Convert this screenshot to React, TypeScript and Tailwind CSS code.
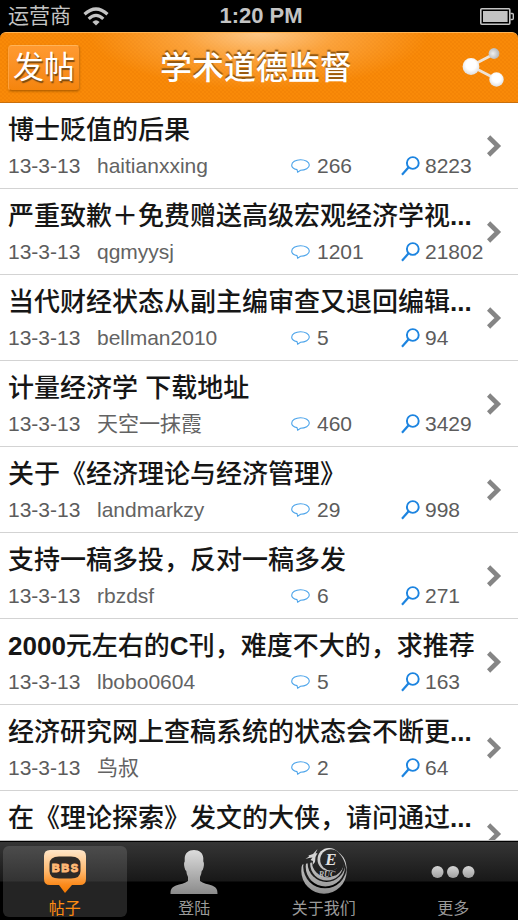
import React from "react";

type Post = {
  title: React.ReactNode;
  author: string;
  replies: number;
  views: number;
};

const B = ({ children }: { children: React.ReactNode }) => (
  <span className="font-bold">{children}</span>
);

const posts: Post[] = [
  { title: "博士贬值的后果", author: "haitianxxing", replies: 266, views: 8223 },
  { title: <>严重致歉＋免费赠送高级宏观经济学视<B>...</B></>, author: "qgmyysj", replies: 1201, views: 21802 },
  { title: <>当代财经状态从副主编审查又退回编辑<B>...</B></>, author: "bellman2010", replies: 5, views: 94 },
  { title: "计量经济学 下载地址", author: "天空一抹霞", replies: 460, views: 3429 },
  { title: "关于《经济理论与经济管理》", author: "landmarkzy", replies: 29, views: 998 },
  { title: "支持一稿多投，反对一稿多发", author: "rbzdsf", replies: 6, views: 271 },
  { title: <><B>2000</B>元左右的<B>C</B>刊，难度不大的，求推荐</>, author: "lbobo0604", replies: 5, views: 163 },
  { title: <>经济研究网上查稿系统的状态会不断更<B>...</B></>, author: "鸟叔", replies: 2, views: 64 },
  { title: <>在《理论探索》发文的大侠，请问通过<B>...</B></>, author: "", replies: 0, views: 0 },
];

function WifiIcon() {
  return (
    <svg width="26" height="19" viewBox="0 0 26 19" fill="none" stroke="#c4c4c4" strokeWidth="3.2">
      <path d="M1.5 7.2Q13-3.2 24.500 7.200" />
      <path d="M5.700 11.800Q13 5 20.300 11.800" />
      <path d="M13 18.500l-3.600-3.600Q13 11.800 16.600 14.900Z" fill="#c4c4c4" stroke="none" />
    </svg>
  );
}

function BatteryIcon() {
  return (
    <svg width="34" height="17" viewBox="0 0 34 17">
      <rect x="0.800" y="0.800" width="29" height="15.400" rx="1" fill="none" stroke="#c4c4c4" strokeWidth="1.600" />
      <rect x="3" y="3" width="24.600" height="11" fill="#c4c4c4" />
      <path d="M30.500 5.500h1.800q1 0 1 1v4q0 1-1 1h-1.800" fill="none" stroke="#c4c4c4" strokeWidth="1.400" />
    </svg>
  );
}

function ShareIcon() {
  return (
    <svg width="42" height="40" viewBox="0 0 42 40">
      <defs>
        <radialGradient id="ball" cx="0.5" cy="0.4" r="0.6">
          <stop offset="0.500" stopColor="#fff" />
          <stop offset="1" stopColor="#dedede" />
        </radialGradient>
        <radialGradient id="far" cx="0.400" cy="0.500" r="0.600">
          <stop offset="0" stopColor="#f0f0f0" />
          <stop offset="1" stopColor="#b4b4b4" />
        </radialGradient>
      </defs>
      <path d="M9 18L32 6M9 18l25 13" stroke="#eee3d6" strokeWidth="2.600" />
      <circle cx="32" cy="5.500" r="5.400" fill="url(#far)" />
      <circle cx="9" cy="18.500" r="8.400" fill="url(#ball)" />
      <circle cx="34.500" cy="31.500" r="7.200" fill="url(#ball)" />
    </svg>
  );
}

function BubbleIcon() {
  return (
    <svg width="19" height="14" viewBox="0 0 19 14" fill="none" stroke="#4aa3ea" strokeWidth="1.100">
      <path d="M6 10.600C2.800 9.900.7 8.300.7 6.200.7 3.100 4.600.7 9.500.7s8.800 2.400 8.800 5.400-3.900 5.200-8.800 5.200L6.700 13.200Z" />
    </svg>
  );
}

function ViewsIcon() {
  return (
    <svg width="19" height="20" viewBox="0 0 19 20" fill="none" stroke="#1c84e0">
      <circle cx="11.800" cy="7" r="5.900" strokeWidth="1.900" />
      <path d="M7.600 11.300L1 18.800" strokeWidth="2.200" />
    </svg>
  );
}

function Chevron() {
  return (
    <svg width="15" height="22" viewBox="0 0 15 22" fill="none" stroke="#858585" strokeWidth="4.600">
      <path d="M1.600 2L10.800 11 1.600 20" />
    </svg>
  );
}

function BbsIcon() {
  return (
    <svg width="44" height="44" viewBox="0 0 44 44">
      <defs>
        <linearGradient id="bbs" x1="0" y1="0" x2="0" y2="1">
          <stop offset="0" stopColor="#ffe6c8" />
          <stop offset="0.500" stopColor="#ffb76b" />
          <stop offset="0.800" stopColor="#fb8b1e" />
          <stop offset="1" stopColor="#f57a00" />
        </linearGradient>
      </defs>
      <path d="M7 0H37Q43 0 43 6V29Q43 35 37 35H29L22 43 16 35H7Q1 35 1 29V6Q1 0 7 0Z" fill="url(#bbs)" />
      <path d="M16 6.500H28Q37.500 6.500 37.500 14V21Q37.500 28.500 28 28.500H16Q6.500 28.500 6.500 21V14Q6.500 6.500 16 6.500Z" fill="#2e2a27" />
      <g textAnchor="middle" fontSize="11" fontWeight="bold" fontFamily="Liberation Sans, sans-serif" fill="#ffb875" stroke="#ffb875" strokeWidth="1">
        <text x="12.700" y="21.500">B</text>
        <text x="22.200" y="21.500">B</text>
        <text x="31.500" y="21.500">S</text>
      </g>
    </svg>
  );
}

function PersonIcon() {
  return (
    <svg width="48" height="44" viewBox="0 0 48 44">
      <defs>
        <linearGradient id="person" x1="0" y1="0" x2="0" y2="1">
          <stop offset="0" stopColor="#dcdcdc" />
          <stop offset="1" stopColor="#8b8b8b" />
        </linearGradient>
      </defs>
      <path d="M24 0C29.500 0 33 3 33.300 8V11.500Q34.500 13 33.500 17.500 33 20 31.700 21 31.500 24 30 27V31C33 33.500 38 34 42 35.500 46.500 37.500 47.500 39 47.500 44H0.500C0.500 39 1.500 37.500 6 35.500 10 34 15 33.500 18 31V27Q16.500 24 16.300 21 15 20 14.500 17.500 13.500 13 14.700 11.500V8C15 3 18.500 0 24 0Z" fill="url(#person)" />
    </svg>
  );
}

function EmblemIcon() {
  return (
    <svg width="48" height="48" viewBox="0 0 48 48">
      <defs>
        <linearGradient id="emblem" gradientUnits="userSpaceOnUse" x1="0" y1="0" x2="0" y2="46">
          <stop offset="0" stopColor="#e2e2e2" />
          <stop offset="1" stopColor="#8e8e8e" />
        </linearGradient>
        <mask id="crescents" maskUnits="userSpaceOnUse" x="0" y="-2" width="48" height="50">
          <circle cx="24" cy="23" r="22.700" fill="#fff" />
          <circle cx="25" cy="18.500" r="21.800" fill="#000" />
          <circle cx="25.300" cy="18.800" r="19.600" fill="#fff" />
          <circle cx="26.500" cy="15" r="18.900" fill="#000" />
          <circle cx="26.800" cy="16" r="16.600" fill="#fff" />
          <circle cx="28" cy="13" r="16.300" fill="#000" />
          <path d="M0-2H48V12L40 14 30 20 14 14 0 17Z" fill="#000" />
        </mask>
        <mask id="ring" maskUnits="userSpaceOnUse" x="0" y="-2" width="48" height="50">
          <circle cx="29" cy="11.500" r="11.500" fill="#fff" />
          <circle cx="30.800" cy="11.800" r="10.600" fill="#000" />
        </mask>
      </defs>
      <rect y="-2" width="48" height="50" fill="url(#emblem)" mask="url(#crescents)" />
      <rect y="-2" width="48" height="50" fill="url(#emblem)" mask="url(#ring)" />
      <path d="M38 4C44 8 47 14 46.500 22 45.500 15 43 9 38 4Z" fill="#cfcfcf" />
      <path d="M5.500 11L9 8.500 8.500 7.500 13 6 17.500 1 15.500 5.500 17.500 5 15.500 9 15 14 12.500 17 13 13 10.500 12 12.500 9.500 9 10Z" fill="#d4d4d4" />
      <text x="31" y="17" textAnchor="middle" fontSize="17" fontWeight="bold" fontStyle="italic" fontFamily="Liberation Serif, serif" fill="#e0e0e0">E</text>
      <text x="27" y="29" textAnchor="middle" fontSize="8" fontWeight="bold" fontStyle="italic" fontFamily="Liberation Serif, serif" fill="#bcbcbc">RUC</text>
    </svg>
  );
}

function MoreIcon() {
  return (
    <svg width="44" height="14" viewBox="0 0 44 14">
      <defs>
        <linearGradient id="dots" x1="0" y1="0" x2="0" y2="1">
          <stop offset="0" stopColor="#d6d6d6" />
          <stop offset="1" stopColor="#a0a0a0" />
        </linearGradient>
      </defs>
      <g fill="url(#dots)">
        <circle cx="6.500" cy="7" r="6" />
        <circle cx="22" cy="7" r="6" />
        <circle cx="37.500" cy="7" r="6" />
      </g>
    </svg>
  );
}

const tabs = [
  { label: "帖子", icon: <BbsIcon />, active: true },
  { label: "登陆", icon: <PersonIcon />, active: false },
  { label: "关于我们", icon: <EmblemIcon />, active: false },
  { label: "更多", icon: <MoreIcon />, active: false },
];

function PostRow({ post }: { post: Post }) {
  return (
    <li className="shrink-0 border-b border-[#d3d3d3]">
      <a href="#post" className="flex h-[85px] items-center pr-4 pl-2">
        <div className="min-w-0 flex-1">
          <h2 className="h-10 whitespace-nowrap text-[26px] leading-10 font-medium text-[#161616]">{post.title}</h2>
          {post.author ? (
            <div className="flex h-8 items-center text-[21px] leading-8 text-[#5c5c5c]">
              <time className="w-[89px] shrink-0">13-3-13</time>
              <span className="min-w-0 flex-1 truncate text-[#636363]">{post.author}</span>
              <span className="flex w-[110px] shrink-0 items-center gap-[7px]">
                <BubbleIcon />
                <span>{post.replies}</span>
              </span>
              <span className="flex w-[86px] shrink-0 items-center gap-[5px]">
                <span className="shrink-0"><ViewsIcon /></span>
                <span>{post.views}</span>
              </span>
            </div>
          ) : (
            <div className="h-8" />
          )}
        </div>
        <span className="shrink-0"><Chevron /></span>
      </a>
    </li>
  );
}

export default function App() {
  return (
    <div className="flex h-screen flex-col overflow-hidden bg-black font-['Liberation_Sans','Noto_Sans_CJK_SC',sans-serif]">
      <div className="grid h-8 shrink-0 grid-cols-3 items-center pr-1 pl-2 text-[#c4c4c4]">
        <div className="flex items-center gap-3 text-[21px] leading-8">
          <span>运营商</span>
          <WifiIcon />
        </div>
        <div className="text-center text-[22px] leading-8 font-bold">1:20 PM</div>
        <div className="flex justify-end"><BatteryIcon /></div>
      </div>

      <header className="h-[71px] shrink-0 overflow-hidden rounded-t-md border-t border-b border-t-[#ffb455] border-b-[#c96f0c] bg-[#f98a08]">
        <div className="h-full bg-[conic-gradient(#e46f0038_25%,transparent_0_50%,#e46f0038_0_75%,transparent_0)] bg-[size:4px_4px]">
          <div className="grid h-full grid-cols-[1fr_auto_1fr] items-center bg-[radial-gradient(ellipse_170px_56px_at_50%_0,#ffd9aacc,#ffbd7080_45%,transparent)] pr-[14px] pl-2">
            <button className="h-[46px] w-[72px] justify-self-start rounded-sm border border-t-[#ffb459] border-r-[#d17815] border-b-[#bd6500] border-l-[#ffa23d] bg-linear-to-b from-[#ff9a30] to-[#f5850c] text-[31px] leading-[42px] text-white shadow-[0_1px_2px_#9b570080] [text-shadow:1px_2px_1px_#7b4a10]">发帖</button>
            <h1 className="text-[32px] leading-[44px] font-medium text-white [text-shadow:0_-2px_1px_#8f5610]">学术道德监督</h1>
            <button aria-label="分享" className="justify-self-end"><ShareIcon /></button>
          </div>
        </div>
      </header>

      <main className="min-h-0 flex-1 overflow-hidden border-b border-[#bdbdbd] bg-white">
        <ul className="flex flex-col">
          {posts.map((post, i) => <PostRow key={i} post={post} />)}
        </ul>
      </main>

      <nav className="grid h-[79px] shrink-0 grid-cols-4 border-t border-black bg-[linear-gradient(#353535,#181818_39px,#000_40px)]">
        {tabs.map((tab) => (
          <button
            key={tab.label}
            className={
              tab.active
                ? "mx-[3px] mt-1 flex h-[71px] flex-col items-center rounded-md bg-[linear-gradient(#4c4c4c,#333_35px,#242424_36px)] text-[#ff8c12]"
                : "mx-[3px] mt-1 flex h-[71px] flex-col items-center text-[#9a9a9a]"
            }
          >
            <span className="flex h-[51px] shrink-0 items-center">{tab.icon}</span>
            <span className="text-base leading-6">{tab.label}</span>
          </button>
        ))}
      </nav>
    </div>
  );
}
